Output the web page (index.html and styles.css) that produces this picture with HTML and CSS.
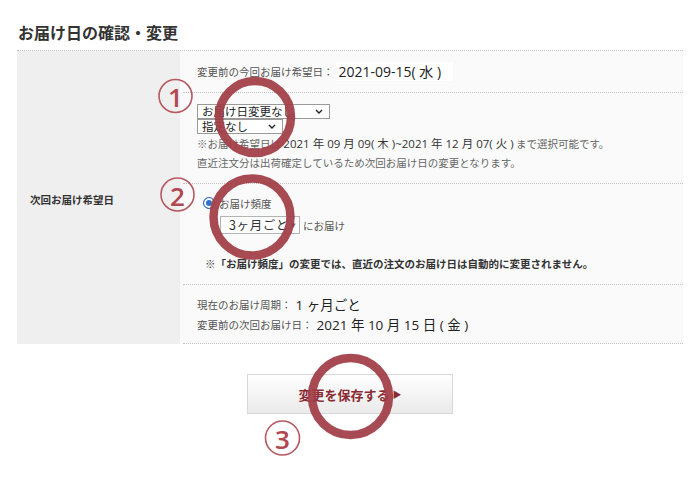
FILE: index.html
```html
<!DOCTYPE html>
<html lang="ja">
<head>
<meta charset="utf-8">
<title>お届け日の確認・変更</title>
<link rel="stylesheet" href="styles.css">
</head>
<body>
<main class="page">
  <h1 class="title">お届け日の確認・変更</h1>
  <div class="form-table">
    <div class="label-cell"><span class="label-text">次回お届け希望日</span></div>
    <div class="content-cell">
      <div class="row row-current">
        <span class="lbl">変更前の今回お届け希望日：</span><span class="val-date">2021-09-15( 水 )</span>
      </div>
      <div class="row row-date">
        <div class="select sel-wide"><span>お届け日変更なし</span><svg class="chev" width="8" height="5" viewBox="0 0 8 5"><path d="M1 1 L4 4 L7 1" fill="none" stroke="#222" stroke-width="1.4"/></svg></div>
        <div class="select sel-narrow"><span>指定なし</span><svg class="chev" width="8" height="5" viewBox="0 0 8 5"><path d="M1 1 L4 4 L7 1" fill="none" stroke="#222" stroke-width="1.4"/></svg></div>
        <p class="note first">※お届け希望日は <span class="num">2021 年 09 月 09( 木 )~2021 年 12 月 07( 火 )</span> まで選択可能です。</p>
        <p class="note">直近注文分は出荷確定しているため次回お届け日の変更となります。</p>
      </div>
      <div class="row row-freq">
        <div class="radio-line"><span class="radio"></span><span class="radio-label">お届け頻度</span></div>
        <div class="freq-line">
          <div class="select sel-freq"><span class="freq-text">3ヶ月ごと</span><span class="tri">▾</span></div>
          <span class="freq-suffix">にお届け</span>
        </div>
        <p class="bold-note">※「お届け頻度」の変更では、直近の注文のお届け日は自動的に変更されません。</p>
      </div>
      <div class="row row-info">
        <div class="info-line"><span class="lbl">現在のお届け周期：</span><span class="val">1 ヶ月ごと</span></div>
        <div class="info-line"><span class="lbl">変更前の次回お届け日：</span><span class="val">2021 年 10 月 15 日 ( 金 )</span></div>
      </div>
    </div>
  </div>
  <div class="actions">
    <button class="save-btn" type="button">変更を保存する<span class="arrow">▶</span></button>
  </div>
</main>
<svg class="marks" width="700" height="478" viewBox="0 0 700 478">
  <g fill="none" stroke="#a23d46" stroke-width="8.5" opacity="0.93">
    <circle cx="255" cy="117" r="36"/>
    <circle cx="252" cy="217" r="38.5"/>
    <circle cx="350.5" cy="396.5" r="38.5"/>
  </g>
  <g fill="none" stroke="#b65860" stroke-width="1.6">
    <circle cx="175.5" cy="96" r="16.5"/>
    <circle cx="177.5" cy="194.5" r="16.5"/>
    <circle cx="282.5" cy="438" r="17"/>
  </g>
  <g class="mark-num" fill="#b2474f">
    <text x="175.5" y="97" text-anchor="middle" dominant-baseline="central">1</text>
    <text x="177.5" y="195.5" text-anchor="middle" dominant-baseline="central">2</text>
    <text x="282.5" y="439" text-anchor="middle" dominant-baseline="central">3</text>
  </g>
</svg>
</body>
</html>
```
FILE: styles.css
```css
* { box-sizing: border-box; }
html, body { margin: 0; padding: 0; background: #fff; }
body {
  width: 700px;
  height: 478px;
  position: relative;
  overflow: hidden;
  font-family: "Open Sans", "Noto Sans CJK JP", sans-serif;
  color: #333;
}
.title {
  margin: 22px 0 8px 18px;
  font-family: "Noto Sans CJK JP", sans-serif;
  font-size: 16px;
  line-height: 20px;
  font-weight: 700;
  color: #333;
}
.form-table {
  display: flex;
  margin: 0 17px;
  border-top: 1px dotted #c2c2c2;
}
.label-cell {
  width: 163px;
  flex: none;
  background: #efefef;
  display: flex;
  align-items: center;
  padding: 4px 0 0 13px;
}
.label-text {
  font-family: "Noto Sans CJK JP", sans-serif;
  font-size: 10.5px;
  font-weight: 700;
  color: #333;
}
.content-cell {
  flex: 1;
  padding-left: 3px;
  background: #fafafa;
}
.row {
  border-bottom: 1px dotted #c2c2c2;
  padding-left: 14px;
}
.lbl {
  font-family: "Noto Sans CJK JP", sans-serif;
  font-size: 10.5px;
  color: #555;
}
.row-current {
  height: 42px;
  display: flex;
  align-items: center;
}
.val-date {
  font-size: 14px;
  line-height: 19px;
  color: #222;
  background: #fff;
  padding: 0 12px 0 3px;
  margin-left: 2px;
}
.row-date {
  height: 91px;
  padding-top: 11px;
}
.select {
  display: flex;
  align-items: center;
  justify-content: space-between;
  background: #fff;
  border: 1px solid #9a9a9a;
  color: #222;
  font-family: "Noto Sans CJK JP", sans-serif;
  white-space: nowrap;
  overflow: hidden;
}
.sel-wide, .sel-narrow {
  height: 15px;
  font-size: 11.5px;
  line-height: 13px;
  padding: 0 6px 0 4px;
}
.sel-wide { width: 133px; }
.sel-narrow { width: 86px; margin-top: 0; }
.chev { flex: none; }
.note {
  margin: 0;
  font-family: "Noto Sans CJK JP", sans-serif;
  font-size: 10.5px;
  line-height: 19px;
  color: #666;
  white-space: nowrap;
}
.note.first { margin-top: 0; }
.note .num {
  font-family: "Open Sans", "Noto Sans CJK JP", sans-serif;
  font-size: 11.5px;
  color: #333;
}
.row-freq {
  height: 101px;
  padding: 12px 0 0 20px;
}
.radio-line {
  display: flex;
  align-items: center;
  height: 14px;
}
.radio {
  width: 12px;
  height: 12px;
  border-radius: 50%;
  border: 1px solid #2f6fd0;
  background: #2f6fd0;
  box-shadow: inset 0 0 0 2px #fff;
}
.radio-label {
  margin-left: 4px;
  font-family: "Noto Sans CJK JP", sans-serif;
  font-size: 10.5px;
  color: #555;
}
.freq-line {
  display: flex;
  align-items: center;
  margin: 6px 0 0 17px;
}
.sel-freq {
  width: 80px;
  height: 18px;
  border-color: #b4b4b4;
  padding: 0 3px 0 8px;
  font-size: 12.5px;
  line-height: 16px;
}
.freq-text { letter-spacing: 0.6px; color: #333; }
.tri { font-size: 9px; color: #666; }
.freq-suffix {
  margin-left: 3px;
  font-family: "Noto Sans CJK JP", sans-serif;
  font-size: 10.5px;
  color: #555;
}
.bold-note {
  margin: 22px 0 0 2px;
  font-family: "Noto Sans CJK JP", sans-serif;
  font-size: 10.5px;
  line-height: 16px;
  font-weight: 700;
  color: #333;
  white-space: nowrap;
}
.row-info {
  padding-top: 9px;
  padding-bottom: 9px;
}
.info-line {
  display: flex;
  align-items: center;
  height: 20px;
}
.info-line .val {
  margin-left: 4px;
  font-size: 13.5px;
  color: #222;
}
.actions {
  display: flex;
  justify-content: center;
  margin-top: 30px;
}
.save-btn {
  width: 206px;
  height: 40px;
  margin: 0;
  padding: 0;
  border: 1px solid #d8d8d8;
  border-radius: 0;
  background: linear-gradient(#ffffff, #eaeaea);
  display: flex;
  align-items: center;
  justify-content: center;
  font-family: "Noto Sans CJK JP", sans-serif;
  font-size: 13px;
  font-weight: 700;
  color: #8a2b34;
}
.save-btn .arrow {
  font-size: 9px;
  margin-left: 3px;
}
.marks {
  position: absolute;
  left: 0;
  top: 0;
  pointer-events: none;
}
.mark-num text {
  font-family: "Open Sans", sans-serif;
  font-size: 26px;
  font-weight: 600;
}
```
